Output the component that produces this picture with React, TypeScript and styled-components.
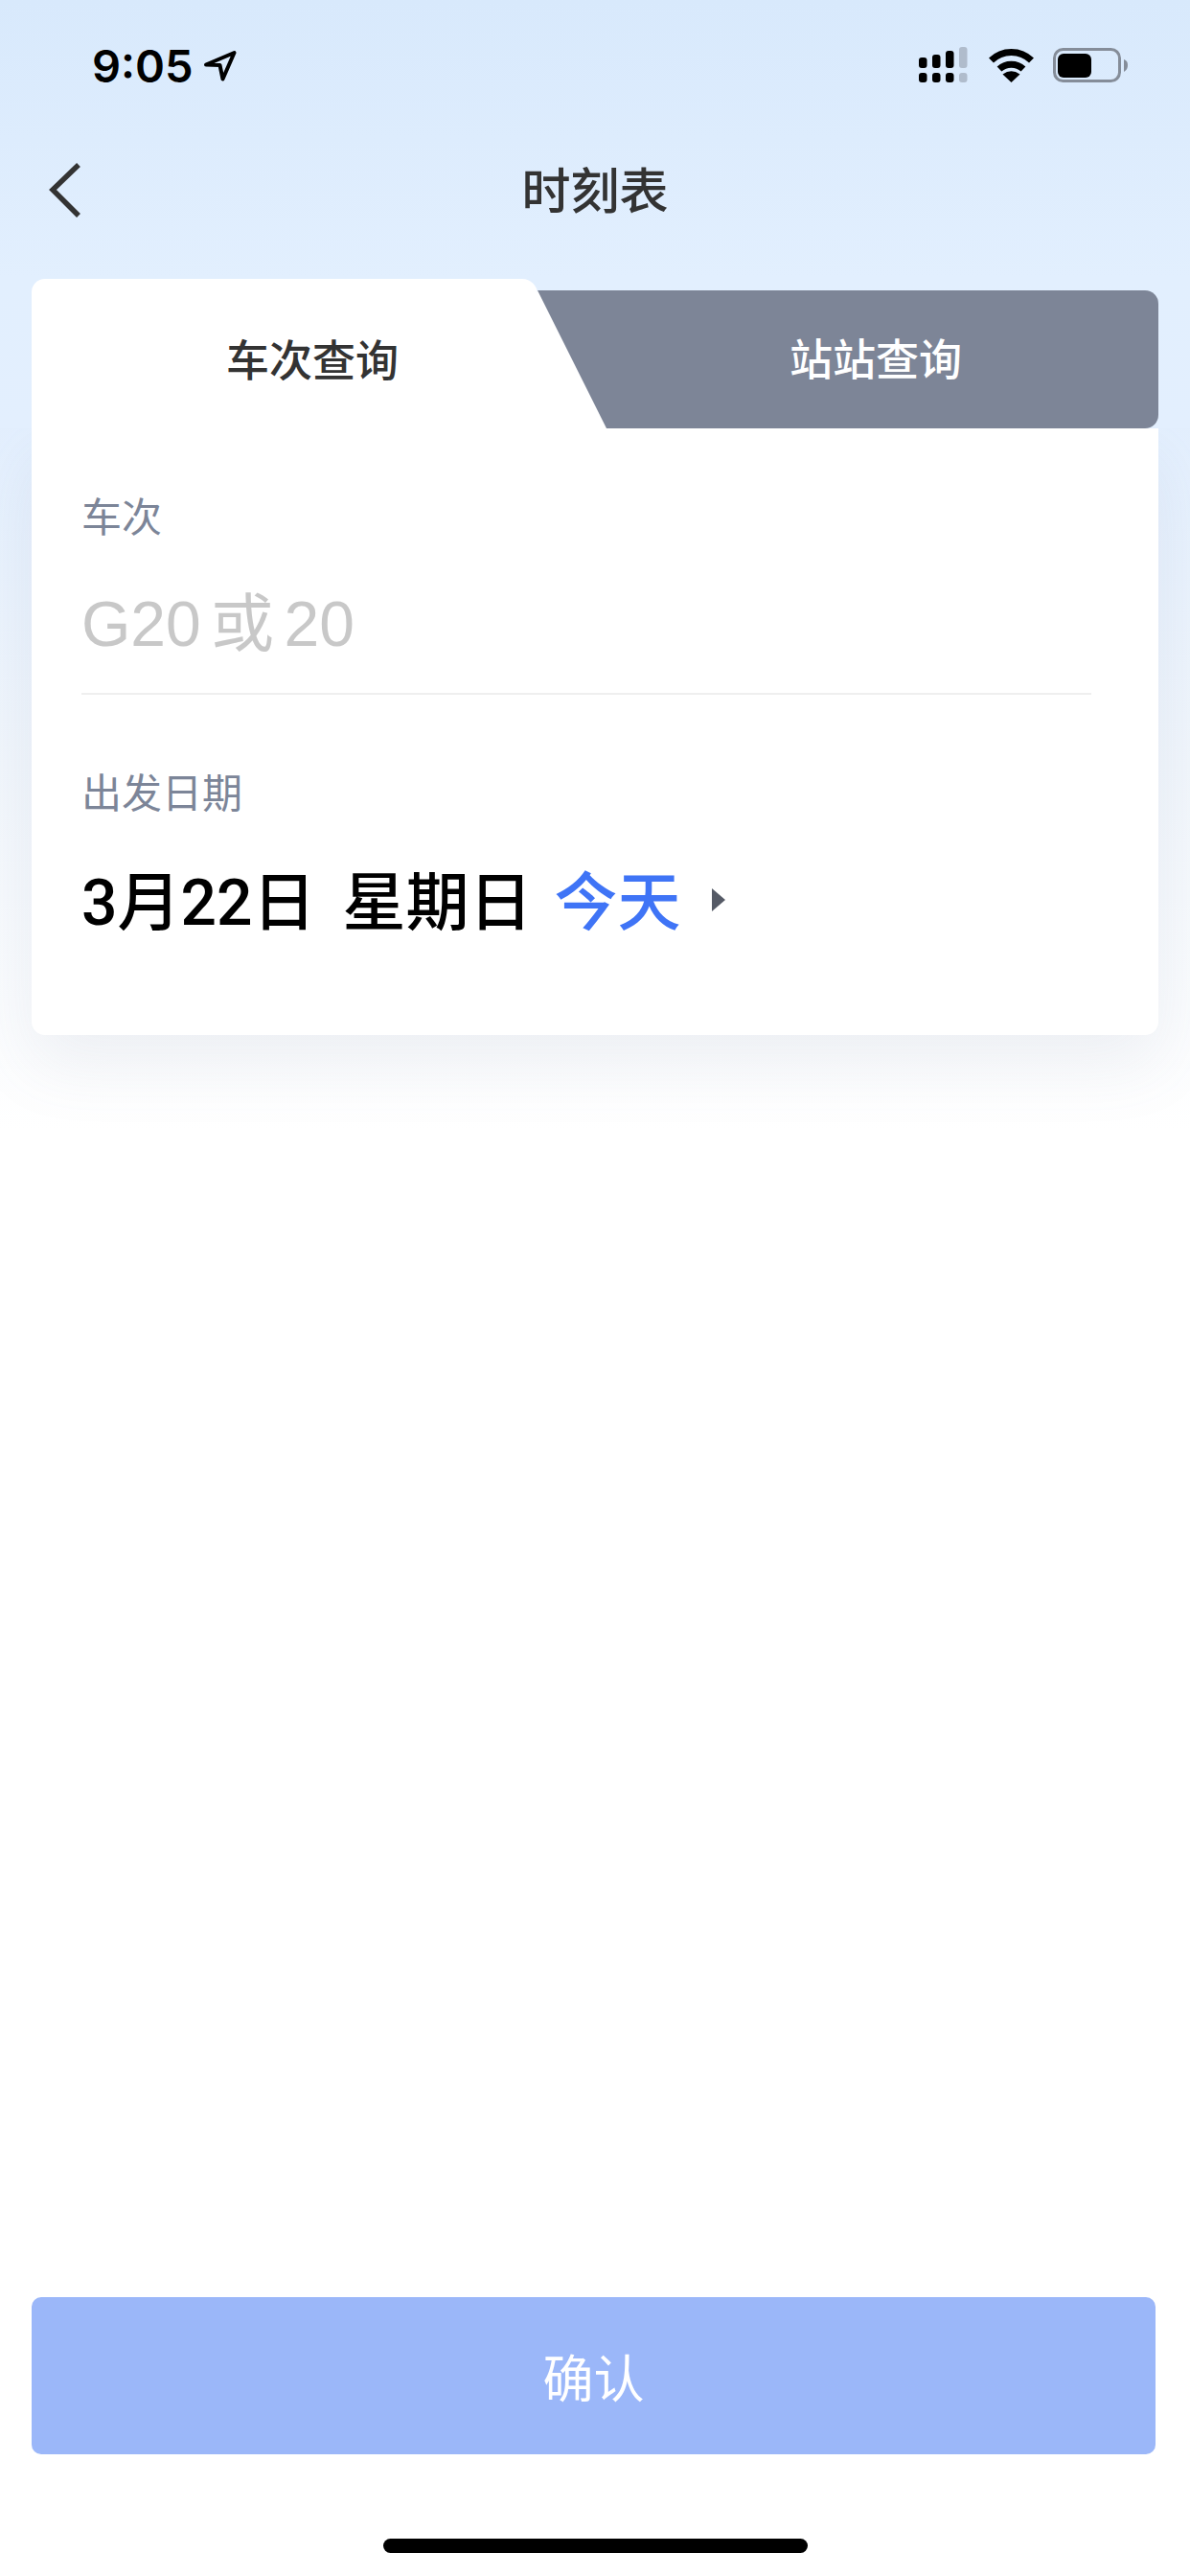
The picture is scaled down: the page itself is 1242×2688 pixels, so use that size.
import React from "react";
import styled, { createGlobalStyle } from "styled-components";

const GlobalStyle = createGlobalStyle`
  html, body {
    margin: 0;
    padding: 0;
    background: #fff;
  }
  * {
    box-sizing: border-box;
  }
`;

const latin = `"Liberation Sans", "Noto Sans CJK SC", sans-serif`;
const medium = `Roboto, "Noto Sans CJK SC", sans-serif`;

const Page = styled.div`
  width: 1242px;
  height: 2688px;
  display: flex;
  flex-direction: column;
  overflow: hidden;
  font-family: ${latin};
  background: linear-gradient(180deg, #e3effe 0, #e3effe 440px, #f1f6fc 800px, #ffffff 1180px);
`;

// gradient band, sits above the card body so the shadow stops at the tabs
const TopBand = styled.header`
  position: relative;
  z-index: 1;
  height: 447px;
  display: flex;
  flex-direction: column;
  background: linear-gradient(180deg, #d8e9fc 0%, #e2effe 65%, #e3effe 100%);
`;

const StatusBar = styled.div`
  height: 136px;
  display: flex;
  align-items: center;
  padding: 0 65px 0 96px;
`;

const Time = styled.span`
  font-family: Inter, sans-serif;
  font-size: 47px;
  font-weight: 600;
  color: #000;
`;

const LocationIcon = styled.svg`
  width: 35px;
  height: 33px;
  margin-left: 10px;
`;

const StatusIcons = styled.div`
  margin-left: auto;
  display: flex;
  align-items: center;
  gap: 20px;
`;

const NavBar = styled.div`
  height: 126px;
  display: grid;
  grid-template-columns: 1fr auto 1fr;
  align-items: center;
  padding: 0 50px 0 50px;
`;

const Title = styled.h1`
  margin: 0 0 6px;
  font-family: ${medium};
  font-size: 51px;
  font-weight: 500;
  color: #333;
`;

const TabRow = styled.div`
  margin: 29px 33px 0;
  height: 156px;
  display: flex;
`;

const ActiveTab = styled.div`
  position: relative;
  width: 528px;
  padding: 8px 0 0 58px;
  display: flex;
  align-items: center;
  justify-content: center;
  background: #fff;
  border-radius: 14px 16px 0 0;
  font-family: ${medium};
  font-size: 45px;
  font-weight: 500;
  color: #333;
  &::after {
    content: "";
    position: absolute;
    z-index: 1;
    left: 100%;
    bottom: 0;
    width: 72px;
    height: 144px;
    background: #fff;
    clip-path: polygon(0 0, 100% 100%, 0 100%);
  }
`;

const IdleTab = styled.div`
  flex: 1;
  margin-top: 12px;
  padding: 0 0 6px 58px;
  display: flex;
  align-items: center;
  justify-content: center;
  background: #7d8597;
  border-radius: 0 14px 14px 0;
  font-family: ${medium};
  font-size: 45px;
  font-weight: 500;
  color: #fff;
`;

const CardBody = styled.section`
  margin: 0 33px;
  height: 633px;
  padding: 66px 70px 0 52px;
  background: #fff;
  border-radius: 0 0 14px 14px;
  box-shadow: 0 30px 70px rgba(110, 120, 150, 0.1);
`;

const Label = styled.div<{ $spaced?: boolean }>`
  margin-top: ${(p) => (p.$spaced ? "76px" : "0")};
  line-height: 56px;
  font-family: ${medium};
  font-size: 42px;
  color: #7c8598;
`;

const Placeholder = styled.div`
  margin-top: 42px;
  padding-bottom: 32px;
  line-height: 80px;
  font-size: 66px;
  word-spacing: -8px;
  color: #c8c8c8;
  border-bottom: 2px solid #efefef;
`;

const DateRow = styled.div`
  margin-top: 39px;
  height: 80px;
  display: flex;
  align-items: center;
  font-family: ${medium};
  font-size: 66px;
  font-weight: 500;
  color: #000;
`;

const Weekday = styled.span`
  margin-left: 28px;
`;

const Today = styled.span`
  margin-left: 23px;
  color: #3f74f6;
`;

const Caret = styled.svg`
  width: 14px;
  height: 24px;
  margin: 6px 0 0 32px;
`;

const ConfirmButton = styled.button`
  margin: auto 36px 0 33px;
  height: 164px;
  border: 0;
  border-radius: 10px;
  background: #9bb7f9;
  font-family: ${latin};
  font-size: 53px;
  color: #fff;
`;

const HomeBar = styled.div`
  align-self: center;
  width: 443px;
  height: 15px;
  margin: 88px 0 24px;
  border-radius: 8px;
  background: #000;
`;

const SignalIcon = () => (
  <svg width="53" height="38" viewBox="0 0 53 38">
    <g fill="#000">
      <rect x="0" y="11" width="8.5" height="11" rx="3" />
      <rect x="14" y="8" width="8.5" height="14" rx="3" />
      <rect x="28" y="4" width="8.5" height="18" rx="3" />
      <rect x="0" y="27" width="8.5" height="10" rx="3" />
      <rect x="14" y="27" width="8.5" height="10" rx="3" />
      <rect x="28" y="27" width="8.5" height="10" rx="3" />
    </g>
    <g fill="#b0bccc">
      <rect x="42" y="0" width="8.5" height="22" rx="3" />
      <rect x="42" y="27" width="8.5" height="10" rx="3" />
    </g>
  </svg>
);

const WifiIcon = () => (
  <svg width="47" height="36" viewBox="0 0 47 36">
    <path d="M2.5 13 C14 1.5 33 1.5 44.5 13" fill="none" stroke="#000" strokeWidth="7" />
    <path d="M11 22 C18 15.5 29 15.5 36 22" fill="none" stroke="#000" strokeWidth="7" />
    <path d="M23.5 36 L14.5 27.5 Q23.5 21 32.5 27.5 Z" fill="#000" />
  </svg>
);

const BatteryIcon = () => (
  <svg width="78" height="36" viewBox="0 0 78 36">
    <rect x="1.5" y="1.5" width="68" height="33" rx="9" fill="none" stroke="#858d99" strokeWidth="3" />
    <rect x="5" y="6" width="35" height="25" rx="6" fill="#000" />
    <path d="M74 12 C77 13 78 15 78 18 C78 21 77 23 74 25 Z" fill="#858d99" />
  </svg>
);

const App: React.FC = () => {
  return (
    <>
      <GlobalStyle />
      <Page>
        <TopBand>
          <StatusBar>
            <Time>9:05</Time>
            <LocationIcon viewBox="0 0 35 33">
              <path
                d="M3 15.5 L32.5 3 L20.5 30.5 L17.5 16 Z"
                fill="none"
                stroke="#000"
                strokeWidth="4"
                strokeLinejoin="round"
              />
            </LocationIcon>
            <StatusIcons>
              <SignalIcon />
              <WifiIcon />
              <BatteryIcon />
            </StatusIcons>
          </StatusBar>
          <NavBar>
            <svg width="36" height="60" viewBox="0 0 36 60">
              <path d="M32 3 L5 29 L32 56" fill="none" stroke="#333" strokeWidth="5.5" />
            </svg>
            <Title>时刻表</Title>
          </NavBar>
          <TabRow>
            <ActiveTab>车次查询</ActiveTab>
            <IdleTab>站站查询</IdleTab>
          </TabRow>
        </TopBand>

        <CardBody>
          <Label>车次</Label>
          <Placeholder>G20 或 20</Placeholder>
          <Label $spaced>出发日期</Label>
          <DateRow>
            <span>3月22日</span>
            <Weekday>星期日</Weekday>
            <Today>今天</Today>
            <Caret viewBox="0 0 14 24">
              <path d="M0 0 L14 12 L0 24 Z" fill="#555a66" />
            </Caret>
          </DateRow>
        </CardBody>

        <ConfirmButton type="button">确认</ConfirmButton>
        <HomeBar />
      </Page>
    </>
  );
};

export default App;
